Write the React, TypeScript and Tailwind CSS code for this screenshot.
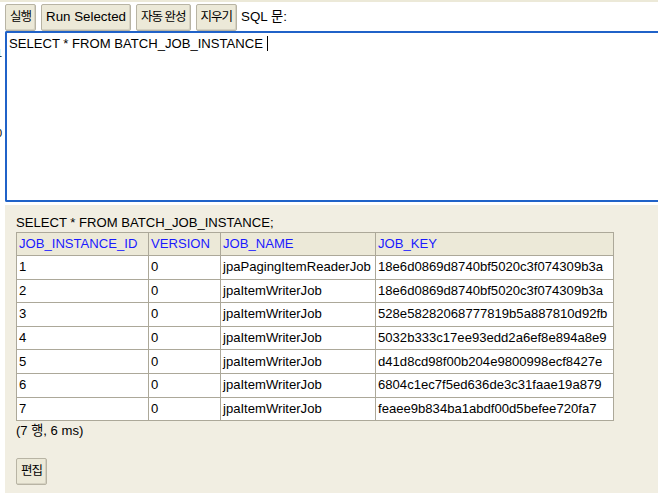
import React from "react";

const rows = [
  ["1", "0", "jpaPagingItemReaderJob", "18e6d0869d8740bf5020c3f074309b3a"],
  ["2", "0", "jpaItemWriterJob", "18e6d0869d8740bf5020c3f074309b3a"],
  ["3", "0", "jpaItemWriterJob", "528e58282068777819b5a887810d92fb"],
  ["4", "0", "jpaItemWriterJob", "5032b333c17ee93edd2a6ef8e894a8e9"],
  ["5", "0", "jpaItemWriterJob", "d41d8cd98f00b204e9800998ecf8427e"],
  ["6", "0", "jpaItemWriterJob", "6804c1ec7f5ed636de3c31faae19a879"],
  ["7", "0", "jpaItemWriterJob", "feaee9b834ba1abdf00d5befee720fa7"],
];

const font = { fontFamily: '"Liberation Sans", Arial, "Noto Sans CJK KR", sans-serif' };

function Btn({ children, ko }: { children: React.ReactNode; ko?: boolean }) {
  return (
    <button
      className={
        "h-[27px] px-[4px] border border-[#b8b4a4] rounded-[2px] bg-[#ece9d8] text-black leading-none shadow-[inset_-1px_-1px_0_#d6d2c2] " +
        (ko ? "text-[12.5px] tracking-[-1px]" : "text-[13.33px]")
      }
    >
      {children}
    </button>
  );
}

export default function App() {
  return (
    <div className="w-[658px] h-[493px] overflow-hidden bg-white relative text-black" style={font}>
      <div className="h-[2px] bg-[#ece9d8]" />
      <div className="flex items-center gap-[5px] pl-[5px] pt-[2px] h-[28px]">
        <Btn ko>실행</Btn>
        <Btn>Run Selected</Btn>
        <Btn ko>자동 완성</Btn>
        <Btn ko>지우기</Btn>
        <span className="text-[13.33px] ml-[-1px]">SQL 문:</span>
      </div>
      <div className="absolute left-[-4px] top-[48px] text-[11px] leading-none text-black">1</div>
      <div className="absolute left-[-4px] top-[128px] text-[11px] leading-none text-black">0</div>
      <div className="ml-[5px] mt-[1px] h-[171px] border-2 border-[#2062c8] border-r-0 rounded-l-[2px] px-[2px] pt-[2px] text-[13.1px] leading-[18px]">
        SELECT * FROM BATCH_JOB_INSTANCE <span className="inline-block w-px h-[15px] bg-black align-[-3px]" />
      </div>
      <div className="ml-[5px] mt-[3px] bg-[#f1eee2] h-[300px] pl-[11px] pt-[9px] text-[13.1px]">
        <div className="leading-[18px]">SELECT * FROM BATCH_JOB_INSTANCE;</div>
        <table className="border-collapse border border-[#aca899] text-[13.1px] leading-[16px]">
          <thead>
            <tr className="bg-[#ece9d8] text-[#1a1aff]">
              <th className="font-normal text-left border border-[#aca899] px-[2px] h-[23px] w-[132px]">JOB_INSTANCE_ID</th>
              <th className="font-normal text-left border border-[#aca899] px-[2px] w-[72px]">VERSION</th>
              <th className="font-normal text-left border border-[#aca899] px-[2px] w-[155px]">JOB_NAME</th>
              <th className="font-normal text-left border border-[#aca899] px-[2px] w-[238px]">JOB_KEY</th>
            </tr>
          </thead>
          <tbody className="bg-white">
            {rows.map((r, i) => (
              <tr key={i}>
                {r.map((c, j) => (
                  <td key={j} className="border border-[#aca899] px-[2px] h-[23.6px] whitespace-nowrap">
                    {c}
                  </td>
                ))}
              </tr>
            ))}
          </tbody>
        </table>
        <div className="leading-[18px] mt-[1px]">(7 행, 6 ms)</div>
        <div className="mt-[18px]">
          <Btn ko>편집</Btn>
        </div>
      </div>
    </div>
  );
}
